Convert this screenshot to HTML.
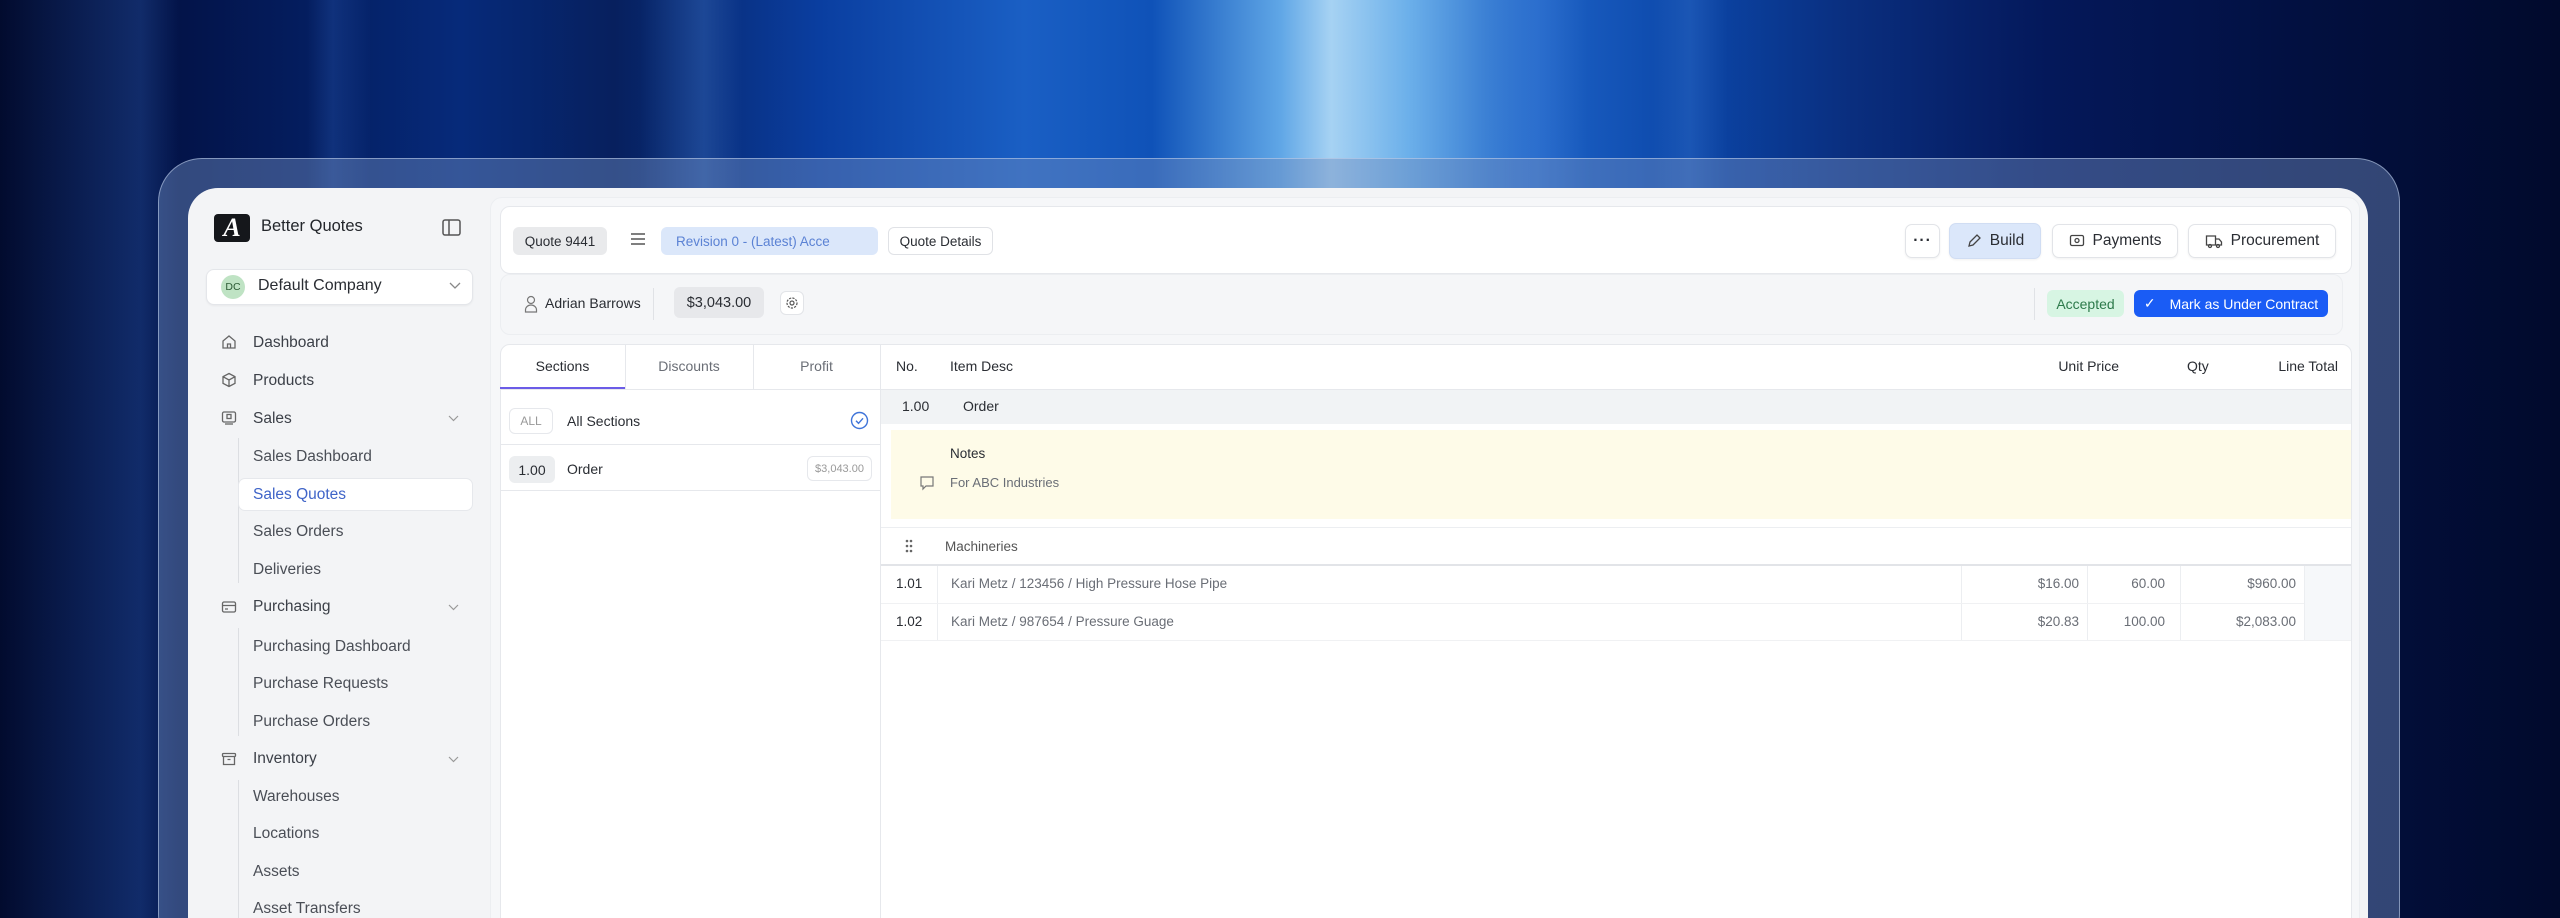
<!DOCTYPE html>
<html style="width:2560px;height:918px;overflow:hidden"><head><meta charset="utf-8">
<style>
*{box-sizing:border-box;margin:0;padding:0}
body{width:2560px;height:918px;overflow:hidden;position:relative;font-family:"Liberation Sans",sans-serif;color:#2a2d33;background:#020b2e}
#wrap{position:absolute;left:0;top:0;width:2560px;height:918px;overflow:hidden;
background:
linear-gradient(90deg,rgba(0,0,0,0) 0%,rgba(60,120,220,.25) 5.5%,rgba(0,0,0,0) 7%,rgba(0,0,0,0) 12%,rgba(60,120,220,.2) 13%,rgba(0,0,0,0) 14.5%,rgba(0,0,0,0) 25%,rgba(90,150,230,.25) 27.5%,rgba(0,0,0,0) 29%,rgba(0,0,0,0) 58%,rgba(90,150,230,.25) 60%,rgba(0,0,0,0) 62%,rgba(0,0,0,0) 64.5%,rgba(90,150,230,.2) 66%,rgba(0,0,0,0) 67.5%),
linear-gradient(90deg,#020b2e 0%,#03154d 8%,#062a7a 18%,#07205e 24%,#0a3ea0 32%,#1a5fc4 40%,#0f52b8 45%,#5fa6e6 50%,#a6d2f3 52%,#6cb0ea 55%,#1d62c6 60%,#0b46a8 66%,#0a2f80 72%,#04185a 80%,#021040 90%,#010a2c 100%);}
.abs{position:absolute}
.frame{left:158px;top:158px;width:2242px;height:800px;border-radius:44px;background:rgba(110,140,190,0.45);border:1.5px solid rgba(200,215,240,0.55)}
.panel{left:188px;top:188px;width:2180px;height:760px;border-radius:30px;background:#f3f4f6}
.t{position:absolute;white-space:nowrap}
.nav{font-size:15.5px;color:#3c4048}
.sub{font-size:15.5px;color:#4a4e56}
.pill{position:absolute;border-radius:6px;font-size:13.5px;display:flex;align-items:center;justify-content:center}
.card{position:absolute;background:#fff;border:1px solid #e6e8ec;border-radius:10px}
.btn{position:absolute;background:#fff;border:1px solid #e2e4e8;border-radius:7px;box-shadow:0 1px 2px rgba(0,0,0,.06);display:flex;align-items:center;justify-content:center;gap:8px;font-size:15.5px;color:#2a2d33}
.sm{font-size:13.5px;color:#6a6e76}
.r{text-align:right}
.vl{position:absolute;width:1px;background:#eceef1}
</style></head><body><div id="wrap">
<div class="abs frame"></div>
<div class="abs panel"></div>

<!-- sidebar -->
<div class="abs" style="left:214px;top:214px;width:36px;height:28px;background:#15171b;border-radius:4px;color:#fff;font-family:'Liberation Serif',serif;font-weight:bold;font-style:italic;font-size:26px;display:flex;align-items:center;justify-content:center">A</div>
<div class="t" style="left:261px;top:217px;font-size:16.5px;color:#23262b">Better Quotes</div>
<svg class="abs" style="left:442px;top:219px" width="19" height="17" viewBox="0 0 19 17"><rect x="1" y="1" width="17" height="15" rx="2" fill="none" stroke="#555" stroke-width="1.5"/><line x1="7" y1="1" x2="7" y2="16" stroke="#555" stroke-width="1.5"/></svg>
<div class="abs" style="left:206px;top:269px;width:267px;height:36px;background:#fff;border:1px solid #e4e6ea;border-radius:8px;box-shadow:0 1px 2px rgba(0,0,0,.05)"></div>
<div class="abs" style="left:221px;top:275px;width:24px;height:24px;border-radius:50%;background:#bfe3c4;font-size:10.5px;color:#2b5a33;display:flex;align-items:center;justify-content:center">DC</div>
<div class="t" style="left:258px;top:277px;font-size:16px;color:#2a2d33">Default Company</div>
<svg class="abs" style="left:449px;top:282px" width="12" height="8"><path d="M1 1l5 5 5-5" fill="none" stroke="#888" stroke-width="1.3"/></svg>

<div class="abs" style="left:238px;top:438px;width:1px;height:145px;background:#dcdee2"></div>
<div class="abs" style="left:238px;top:628px;width:1px;height:108px;background:#dcdee2"></div>
<div class="abs" style="left:238px;top:780px;width:1px;height:140px;background:#dcdee2"></div>
<div class="abs" style="left:238px;top:478px;width:235px;height:33px;background:#fff;border:1px solid #e6e8ec;border-radius:7px"></div>

<svg class="abs" style="left:221px;top:334px" width="16" height="16" viewBox="0 0 16 16" fill="none" stroke="#666" stroke-width="1.3"><path d="M2 7l6-5 6 5v7H2z M6.5 14v-4h3v4"/></svg>
<svg class="abs" style="left:221px;top:372px" width="16" height="16" viewBox="0 0 16 16" fill="none" stroke="#666" stroke-width="1.3"><path d="M8 1.5l6 3.2v6.6L8 14.5 2 11.3V4.7z M2 4.7l6 3.3 6-3.3 M8 8v6.5"/></svg>
<svg class="abs" style="left:221px;top:410px" width="16" height="16" viewBox="0 0 16 16" fill="none" stroke="#666" stroke-width="1.3"><rect x="1.5" y="2" width="13" height="10" rx="1.5"/><rect x="6" y="4.5" width="4" height="4"/><path d="M4 14h8"/></svg>
<svg class="abs" style="left:221px;top:599px" width="16" height="16" viewBox="0 0 16 16" fill="none" stroke="#666" stroke-width="1.3"><rect x="1.5" y="3" width="13" height="10" rx="1.5"/><path d="M1.5 6.5h13 M4 10h3"/></svg>
<svg class="abs" style="left:221px;top:751px" width="16" height="16" viewBox="0 0 16 16" fill="none" stroke="#666" stroke-width="1.3"><rect x="1.5" y="2.5" width="13" height="3" rx="1"/><path d="M2.5 5.5v8h11v-8 M6.5 8.5h3"/></svg>
<svg class="abs" style="left:448px;top:415px" width="11" height="7"><path d="M1 1l4.5 4.5L10 1" fill="none" stroke="#999" stroke-width="1.2"/></svg>
<svg class="abs" style="left:448px;top:604px" width="11" height="7"><path d="M1 1l4.5 4.5L10 1" fill="none" stroke="#999" stroke-width="1.2"/></svg>
<svg class="abs" style="left:448px;top:756px" width="11" height="7"><path d="M1 1l4.5 4.5L10 1" fill="none" stroke="#999" stroke-width="1.2"/></svg>

<div class="t nav" style="left:253px;top:334px">Dashboard</div>
<div class="t nav" style="left:253px;top:372px">Products</div>
<div class="t nav" style="left:253px;top:410px">Sales</div>
<div class="t sub" style="left:253px;top:448px">Sales Dashboard</div>
<div class="t sub" style="left:253px;top:486px;color:#3f64c8">Sales Quotes</div>
<div class="t sub" style="left:253px;top:523px">Sales Orders</div>
<div class="t sub" style="left:253px;top:561px">Deliveries</div>
<div class="t nav" style="left:253px;top:598px">Purchasing</div>
<div class="t sub" style="left:253px;top:638px">Purchasing Dashboard</div>
<div class="t sub" style="left:253px;top:675px">Purchase Requests</div>
<div class="t sub" style="left:253px;top:713px">Purchase Orders</div>
<div class="t nav" style="left:253px;top:750px">Inventory</div>
<div class="t sub" style="left:253px;top:788px">Warehouses</div>
<div class="t sub" style="left:253px;top:825px">Locations</div>
<div class="t sub" style="left:253px;top:863px">Assets</div>
<div class="t sub" style="left:253px;top:900px">Asset Transfers</div>

<!-- main -->
<div class="abs" style="left:490px;top:197px;width:1870px;height:730px;background:#f6f7f9;border-radius:12px 12px 0 0;border:1px solid #eceef1"></div>
<div class="card" style="left:500px;top:206px;width:1852px;height:68px"></div>
<div class="pill" style="left:513px;top:227px;width:94px;height:28px;background:#e9eaec;color:#2a2d33">Quote 9441</div>
<svg class="abs" style="left:630px;top:232px" width="16" height="14"><path d="M1 2h14M1 7h14M1 12h14" stroke="#555" stroke-width="1.4"/></svg>
<div class="pill" style="left:661px;top:227px;width:217px;height:28px;background:#dbe7fa;color:#5b82d4;justify-content:flex-start;padding-left:15px">Revision 0 - (Latest) Acce</div>
<div class="pill" style="left:888px;top:227px;width:105px;height:28px;background:#fff;border:1px solid #e0e2e6;color:#2a2d33">Quote Details</div>
<div class="btn" style="left:1905px;top:224px;width:35px;height:34px;font-weight:bold;letter-spacing:1px">···</div>
<div class="btn" style="left:1949px;top:223px;width:92px;height:36px;background:#dbe7fa;border-color:#d0ddf3">
<svg width="16" height="16" viewBox="0 0 16 16"><path d="M3 13l1-4 7-7 3 3-7 7z" fill="none" stroke="#444" stroke-width="1.3"/></svg>Build</div>
<div class="btn" style="left:2052px;top:224px;width:126px;height:34px">
<svg width="16" height="16" viewBox="0 0 16 16" fill="none" stroke="#444" stroke-width="1.3"><rect x="1.5" y="2.5" width="13" height="10" rx="1.5"/><circle cx="8" cy="7.5" r="2"/></svg>Payments</div>
<div class="btn" style="left:2188px;top:224px;width:148px;height:34px">
<svg width="18" height="16" viewBox="0 0 18 16" fill="none" stroke="#444" stroke-width="1.3"><path d="M1.5 3h9v9h-9z M10.5 6h3.5l2.5 3v3h-6"/><circle cx="5" cy="13" r="1.5"/><circle cx="13" cy="13" r="1.5"/></svg>Procurement</div>

<div class="abs" style="left:500px;top:274px;width:1843px;height:61px;background:#f5f6f8;border:1px solid #eceef1;border-radius:10px"></div>
<svg class="abs" style="left:524px;top:295px" width="14" height="18" viewBox="0 0 14 18" fill="none" stroke="#777" stroke-width="1.2"><circle cx="7" cy="5" r="3.5"/><path d="M1.5 17v-2a5.5 5 0 0111 0v2z"/></svg>
<div class="t" style="left:545px;top:295px;font-size:14px;color:#2a2d33">Adrian Barrows</div>
<div class="abs" style="left:653px;top:288px;width:1px;height:32px;background:#e0e2e6"></div>
<div class="pill" style="left:674px;top:287px;width:90px;height:31px;background:#e7e8eb;color:#2a2d33;font-size:14.5px">$3,043.00</div>
<div class="pill" style="left:780px;top:291px;width:24px;height:24px;background:#fff;border:1px solid #e2e4e8">
<svg width="14" height="14" viewBox="0 0 14 14" fill="none" stroke="#555" stroke-width="1.2"><circle cx="7" cy="7" r="2"/><circle cx="7" cy="7" r="5" stroke-dasharray="2.2 1.2"/></svg></div>
<div class="abs" style="left:2034px;top:288px;width:1px;height:32px;background:#e0e2e6"></div>
<div class="pill" style="left:2047px;top:290px;width:77px;height:27px;background:#d7f5e3;color:#2d7a4b;font-size:14px">Accepted</div>
<div class="pill" style="left:2134px;top:290px;width:194px;height:27px;background:#1a5cf5;color:#fff;font-size:14px;gap:14px"><span>✓</span>Mark as Under Contract</div>

<div class="card" style="left:500px;top:344px;width:1852px;height:600px;border-radius:10px 10px 0 0"></div>
<div class="abs" style="left:880px;top:344px;width:1px;height:574px;background:#e6e8ec"></div>
<div class="abs" style="left:625px;top:344px;width:1px;height:45px;background:#e6e8ec"></div>
<div class="abs" style="left:753px;top:344px;width:1px;height:45px;background:#e6e8ec"></div>
<div class="abs" style="left:500px;top:389px;width:380px;height:1px;background:#e6e8ec"></div>
<div class="abs" style="left:500px;top:387px;width:125px;height:2px;background:#6b5ce7"></div>
<div class="t" style="left:500px;top:358px;width:125px;text-align:center;font-size:14px;color:#2a2d33">Sections</div>
<div class="t" style="left:625px;top:358px;width:128px;text-align:center;font-size:14px;color:#6a6e76">Discounts</div>
<div class="t" style="left:753px;top:358px;width:127px;text-align:center;font-size:14px;color:#6a6e76">Profit</div>
<div class="pill" style="left:509px;top:408px;width:44px;height:26px;border:1px solid #e6e8ec;color:#999;font-size:12px">ALL</div>
<div class="t" style="left:567px;top:413px;font-size:14px;color:#2a2d33">All Sections</div>
<svg class="abs" style="left:850px;top:411px" width="19" height="19" viewBox="0 0 19 19" fill="none" stroke="#3f74d9" stroke-width="1.4"><circle cx="9.5" cy="9.5" r="8"/><path d="M6 9.8l2.5 2.5 4.5-5"/></svg>
<div class="abs" style="left:500px;top:444px;width:380px;height:1px;background:#e6e8ec"></div>
<div class="pill" style="left:509px;top:456px;width:46px;height:27px;background:#eceef0;color:#2a2d33;font-size:14px">1.00</div>
<div class="t" style="left:567px;top:461px;font-size:14px;color:#2a2d33">Order</div>
<div class="pill" style="left:807px;top:456px;width:65px;height:25px;border:1px solid #e6e8ec;color:#999;font-size:11px">$3,043.00</div>
<div class="abs" style="left:500px;top:490px;width:380px;height:1px;background:#e6e8ec"></div>

<div class="t" style="left:896px;top:358px;font-size:14px;color:#2a2d33">No.</div>
<div class="t" style="left:950px;top:358px;font-size:14px;color:#2a2d33">Item Desc</div>
<div class="t r" style="left:2000px;top:358px;width:119px;font-size:14px;color:#2a2d33">Unit Price</div>
<div class="t" style="left:2187px;top:358px;font-size:14px;color:#2a2d33">Qty</div>
<div class="t r" style="left:2240px;top:358px;width:98px;font-size:14px;color:#2a2d33">Line Total</div>
<div class="abs" style="left:881px;top:389px;width:1470px;height:1px;background:#e6e8ec"></div>
<div class="abs" style="left:881px;top:390px;width:1470px;height:34px;background:#f1f3f5"></div>
<div class="t" style="left:902px;top:398px;font-size:14px;color:#2a2d33">1.00</div>
<div class="t" style="left:963px;top:398px;font-size:14px;color:#2a2d33">Order</div>
<div class="abs" style="left:891px;top:430px;width:1460px;height:89px;background:#fefbe8"></div>
<div class="t" style="left:950px;top:446px;font-size:13.5px;color:#2a2d33">Notes</div>
<svg class="abs" style="left:919px;top:475px" width="16" height="16" viewBox="0 0 16 16" fill="none" stroke="#777" stroke-width="1.2"><path d="M2 2h12v9H7l-3 3v-3H2z"/></svg>
<div class="t" style="left:950px;top:475px;font-size:13px;color:#6a6e76">For ABC Industries</div>
<div class="abs" style="left:881px;top:527px;width:1470px;height:1px;background:#eceef1"></div>
<svg class="abs" style="left:905px;top:539px" width="8" height="14"><g fill="#666"><circle cx="2" cy="2" r="1.3"/><circle cx="6" cy="2" r="1.3"/><circle cx="2" cy="7" r="1.3"/><circle cx="6" cy="7" r="1.3"/><circle cx="2" cy="12" r="1.3"/><circle cx="6" cy="12" r="1.3"/></g></svg>
<div class="t" style="left:945px;top:539px;font-size:13.5px;color:#555">Machineries</div>
<div class="abs" style="left:881px;top:564px;width:1470px;height:2px;background:#e2e4e8"></div>
<div class="abs" style="left:2304px;top:566px;width:47px;height:74px;background:#f6f8fa"></div>
<div class="vl" style="left:937px;top:566px;height:74px"></div>
<div class="vl" style="left:1961px;top:566px;height:74px"></div>
<div class="vl" style="left:2087px;top:566px;height:74px"></div>
<div class="vl" style="left:2180px;top:566px;height:74px"></div>
<div class="vl" style="left:2304px;top:566px;height:74px"></div>
<div class="abs" style="left:881px;top:603px;width:1423px;height:1px;background:#f0f1f3"></div>
<div class="abs" style="left:881px;top:640px;width:1470px;height:1px;background:#f0f1f3"></div>
<div class="t" style="left:896px;top:576px;font-size:13.5px;color:#2a2d33">1.01</div>
<div class="t sm" style="left:951px;top:576px">Kari Metz / 123456 / High Pressure Hose Pipe</div>
<div class="t sm r" style="left:1979px;top:576px;width:100px">$16.00</div>
<div class="t sm r" style="left:2090px;top:576px;width:75px">60.00</div>
<div class="t sm r" style="left:2196px;top:576px;width:100px">$960.00</div>
<div class="t" style="left:896px;top:614px;font-size:13.5px;color:#2a2d33">1.02</div>
<div class="t sm" style="left:951px;top:614px">Kari Metz / 987654 / Pressure Guage</div>
<div class="t sm r" style="left:1979px;top:614px;width:100px">$20.83</div>
<div class="t sm r" style="left:2090px;top:614px;width:75px">100.00</div>
<div class="t sm r" style="left:2196px;top:614px;width:100px">$2,083.00</div>
</div></body></html>
